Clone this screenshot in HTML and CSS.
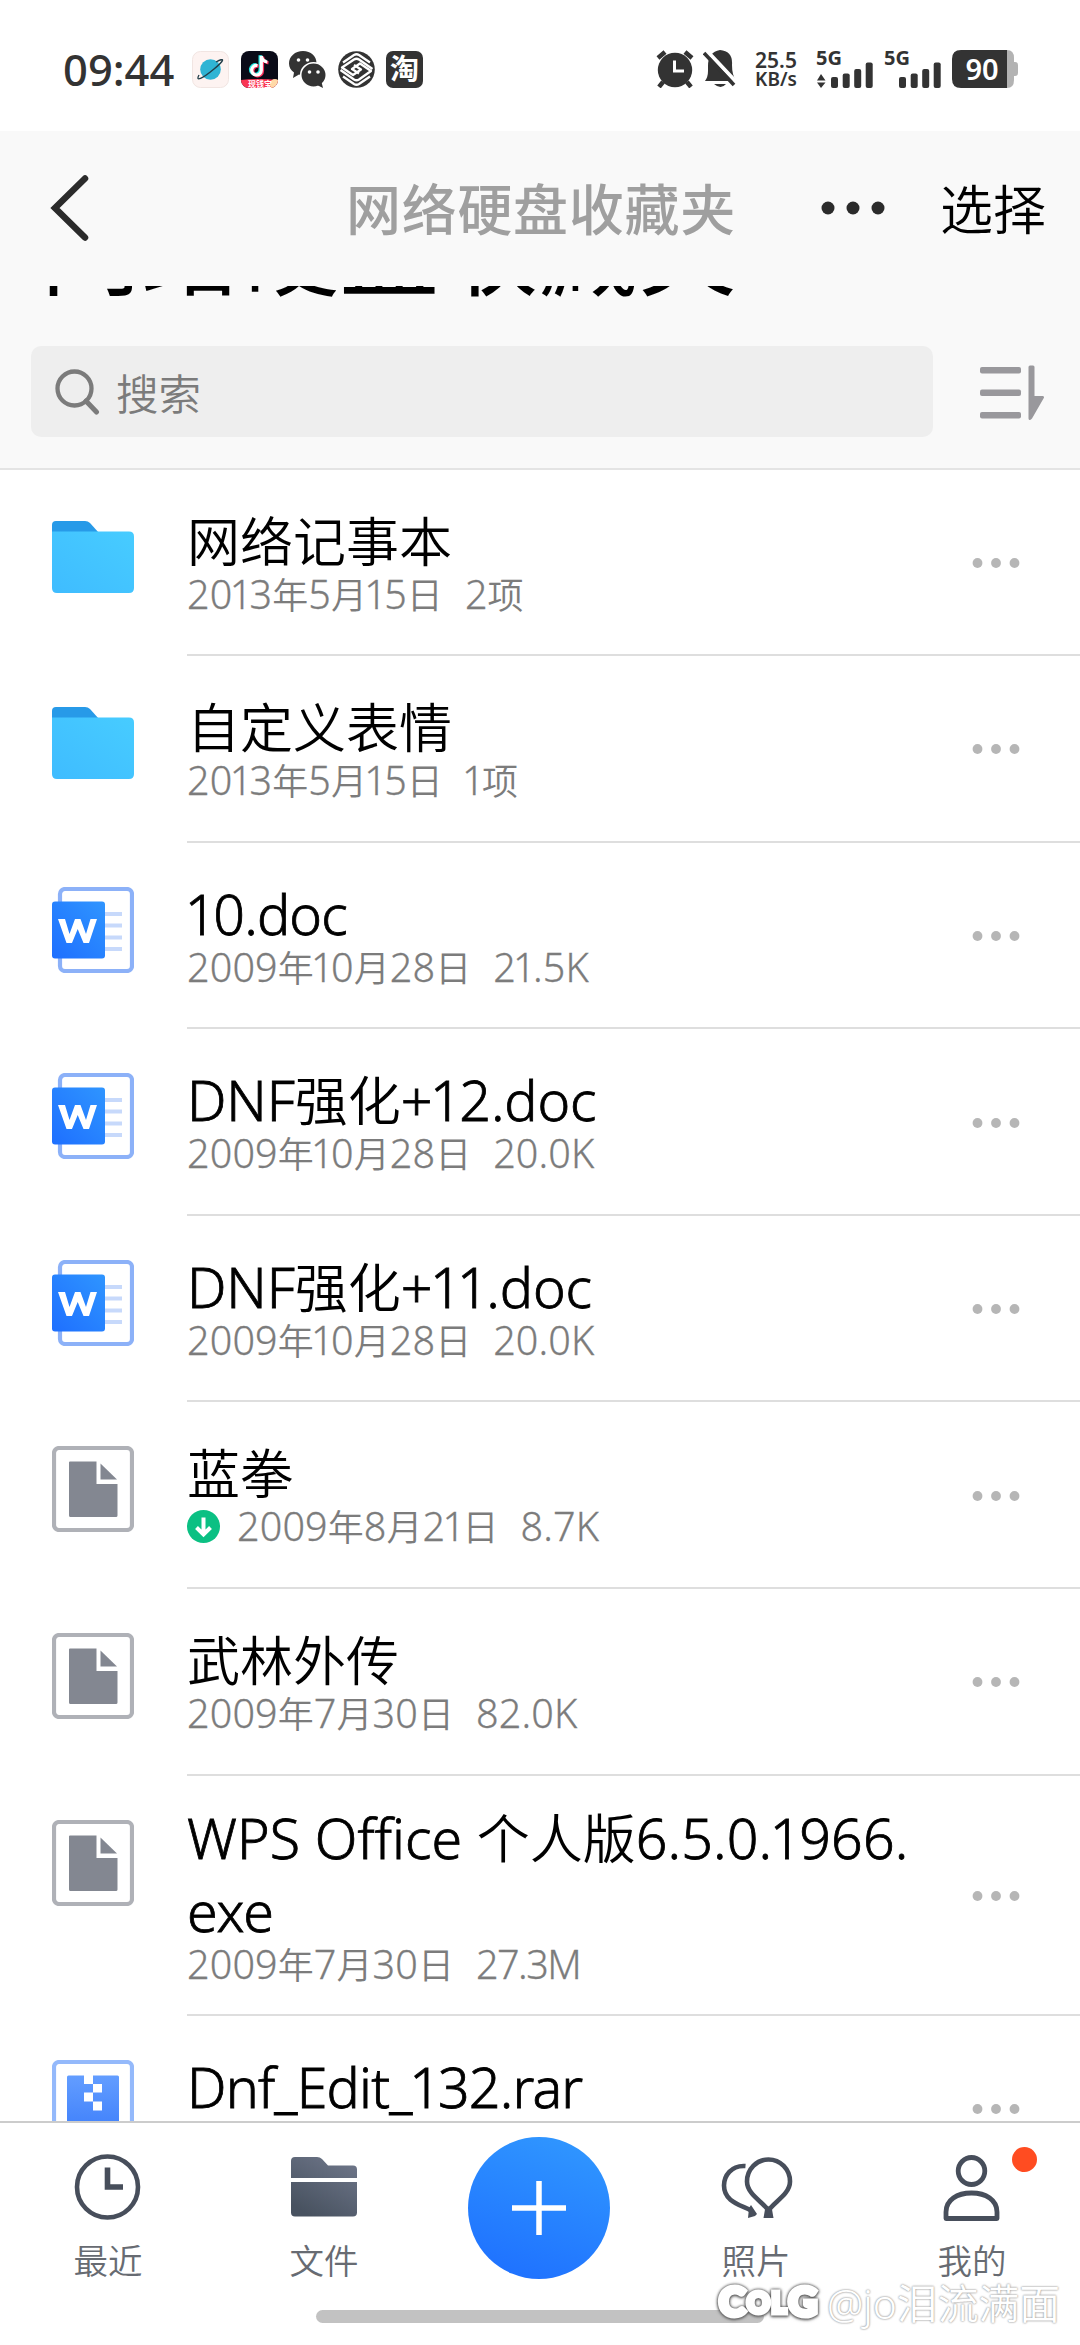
FILE: index.html
```html
<!DOCTYPE html>
<html lang="zh-CN">
<head>
<meta charset="utf-8">
<title>网络硬盘收藏夹</title>
<link rel="stylesheet" href="styles.css">
</head>
<body>
<svg class="defs" width="0" height="0" aria-hidden="true">
  <defs>
    <linearGradient id="g-folder" x1="1" y1="0" x2="0" y2="1"><stop offset="0" stop-color="#47ccff"/><stop offset="1" stop-color="#3fbcff"/></linearGradient>
    <linearGradient id="g-word" x1="1" y1="0" x2="0" y2="1"><stop offset="0" stop-color="#2f95ff"/><stop offset="1" stop-color="#1e6fff"/></linearGradient>
    <linearGradient id="g-zip" x1="0" y1="0" x2="0" y2="1"><stop offset="0" stop-color="#639dff"/><stop offset="1" stop-color="#3f80fb"/></linearGradient>
    <linearGradient id="g-nav" gradientUnits="userSpaceOnUse" x1="50" y1="0" x2="15" y2="60"><stop offset="0" stop-color="#6e7689"/><stop offset="1" stop-color="#485260"/></linearGradient>
    <symbol id="i-folder" viewBox="0 0 82 86">
      <path d="M0 26V11q0-4 4-4h29q3 0 5 2l9 10v8z" fill="#279ae8"/>
      <path d="M0 17.500H77q5 0 5 5V74q0 5-5 5H5q-5 0-5-5z" fill="url(#g-folder)"/>
    </symbol>
    <symbol id="i-word" viewBox="0 0 82 86">
      <rect x="8" y="2" width="72" height="82" rx="5" fill="#fff" stroke="#8cb1f8" stroke-width="4.200"/>
      <path d="M52 27H70M52 38.500H70M52 50.500H70M52 62H70" stroke="#c7d9fb" stroke-width="4"/>
      <rect x="0" y="14.500" width="53" height="57" rx="3" fill="url(#g-word)"/>
      <path d="M6 32H13L17.500 47L23 32H28.500L34 47L38.500 32H45L37 56H31.500L25.700 42L20 56H14.500z" fill="#fff"/>
    </symbol>
    <symbol id="i-file" viewBox="0 0 82 86">
      <rect x="2" y="2" width="78" height="82" rx="5" fill="#fff" stroke="#afb1b7" stroke-width="4.200"/>
      <path d="M18 15.500H44.500V38H65.500V69.500q0 1.500-1.500 1.500H18.500q-1.500 0-1.500-1.500V16.500q0-1 1-1z" fill="#838791"/>
      <path d="M48.500 17.500V33.500H65z" fill="#838791"/>
    </symbol>
    <symbol id="i-zip" viewBox="0 0 82 86">
      <rect x="2" y="2" width="78" height="82" rx="5" fill="#fff" stroke="#94b9fb" stroke-width="4.200"/>
      <rect x="15" y="15.500" width="52" height="56" rx="1.500" fill="url(#g-zip)"/>
      <path d="M32 15h9v9h-9zM41 24h9v8.500h-9zM32 32.500h9v9h-9zM41 41.500h9v9h-9z" fill="#fff"/>
    </symbol>
    <symbol id="i-more" viewBox="0 0 48 12"><g fill="#b6b6b6"><circle cx="5.500" cy="6" r="4.900"/><circle cx="24" cy="6" r="4.900"/><circle cx="42.500" cy="6" r="4.900"/></g></symbol>
    <symbol id="i-bars" viewBox="0 0 42 28"><g fill="#333"><rect x="0" y="16" width="7" height="11" rx="2"/><rect x="11.700" y="12.500" width="7" height="14.500" rx="2"/><rect x="23.200" y="8" width="7" height="19" rx="2"/><rect x="34.700" y="1.500" width="7" height="25.500" rx="2"/></g></symbol>
  </defs>
</svg>

<div class="screen">
  <header class="status">
    <time class="clock">09:44</time>
    <div class="apps">
      <svg width="37" height="37" viewBox="0 0 37 37"><rect x=".5" y=".5" width="36" height="36" rx="8" fill="#fdf3f1" stroke="#f1e5e2"/><circle cx="18.500" cy="18.500" r="10.300" fill="#2fb4d4"/><path d="M24 11C33 6 33 9 22 18C10 28 3 31 7 24" fill="none" stroke="#223f4a" stroke-width="1.400"/></svg>
      <svg width="37" height="37" viewBox="0 0 37 37"><defs><clipPath id="c-dy"><rect width="37" height="37" rx="8"/></clipPath></defs><g clip-path="url(#c-dy)"><rect width="37" height="37" fill="#0a0b18"/><g fill="none" stroke-width="3.200"><path d="M16.500 14.500a4.800 4.800 0 1 0 3.800 4.700V5q1 5.500 6 6" stroke="#25e4e0" transform="translate(-1.200 -.8)"/><path d="M16.500 14.500a4.800 4.800 0 1 0 3.800 4.700V5q1 5.500 6 6" stroke="#fb2d5a" transform="translate(1.200 .8)"/><path d="M16.500 14.500a4.800 4.800 0 1 0 3.800 4.700V5q1 5.500 6 6" stroke="#fff"/></g><path d="M0 29Q19 27 37 29V37H0z" fill="#fa3553"/><circle cx="34" cy="33" r="5" fill="#ffd9a8"/></g><text x="7" y="35.500" class="dy-tag">现钱宝</text></svg>
      <svg width="37" height="37" viewBox="0 0 37 37"><path d="M14 0C6 0 0 5.500 0 12.500c0 4 2 7 5 9L4 27l6-3.500q2 .6 4 .6C22 24 27.500 19 27.500 12S22 0 14 0z" fill="#333"/><ellipse cx="24.500" cy="24" rx="12.800" ry="12.300" fill="#333" stroke="#fff" stroke-width="1.600"/><path d="M28 34l6 3-1.500-6z" fill="#333"/><g fill="#fff"><circle cx="9.500" cy="9" r="1.800"/><circle cx="18.500" cy="9" r="1.800"/><circle cx="20.500" cy="21" r="1.800"/><circle cx="29" cy="21" r="1.800"/></g></svg>
      <svg width="37" height="37" viewBox="0 0 37 37"><circle cx="18.500" cy="18.500" r="18.300" fill="#333"/><g fill="none" stroke="#fff" stroke-width="2.300" stroke-linejoin="round"><path d="M2.500 19L16 28.500Q18.500 30 21 28.500L33 20L22 12.500L14 18L21 22.500"/><path d="M34.500 18L21 8.500Q18.500 7 16 8.500L4 16.500L15 24L23 18.500L16 14"/><path d="M5 25.500L16 33Q18.500 34.500 21 33L32 25.500"/><path d="M32 11.500L21 4Q18.500 2.500 16 4L5 11.500"/></g></svg>
      <svg width="37" height="37" viewBox="0 0 37 37"><rect width="37" height="37" rx="7" fill="#333"/><text x="18.500" y="29" class="tao">淘</text></svg>
    </div>
    <div class="signals">
      <svg class="s-alarm" width="38" height="38" viewBox="0 0 38 38"><circle cx="19" cy="20" r="17.200" fill="#333"/><path d="M2 8L9 2M36 8L29 2" stroke="#333" stroke-width="4.500"/><path d="M7 32L3 37M31 32L35 37" stroke="#333" stroke-width="4.500"/><path d="M18.500 10.500V21H28" fill="none" stroke="#fff" stroke-width="3"/></svg>
      <svg class="s-bell" width="34" height="38" viewBox="0 0 34 38"><path d="M2 31q3-4 3-10V16Q5 2 17 0q13 1 12 15 0 10 4 16zM11 34h12q-5 6-12 0z" fill="#333"/><path d="M3 0L34 33" stroke="#fff" stroke-width="4"/><path d="M1 3L31 35" stroke="#333" stroke-width="3.600"/></svg>
      <div class="speed"><span>25.5</span><span>KB/s</span></div>
      <svg class="s-5g" width="57" height="38" viewBox="0 0 57 38"><text x="0" y="14.500" class="fiveg">5G</text><path d="M1 30.500L5 24L9.500 30.500zM1 32.500L5 38L9.500 32.500z" fill="#333"/><use href="#i-bars" x="15" y="11" width="42" height="28"/></svg>
      <svg class="s-5g2" width="57" height="38" viewBox="0 0 57 38"><text x="0" y="14.500" class="fiveg">5G</text><use href="#i-bars" x="15" y="11" width="42" height="28"/></svg>
      <svg width="66" height="38" viewBox="0 0 66 38"><path d="M50 0h5q7 0 7 8v4h1q3 0 3 3v8q0 3-3 3h-1v4q0 8-7 8h-5z" fill="#b3b3b3"/><path d="M9 0H55V38H9Q0 38 0 29V9Q0 0 9 0z" fill="#333"/><text x="30" y="29.500" class="batt">90</text></svg>
    </div>
  </header>

  <section class="head">
    <div class="topbar">
      <svg class="back" width="40" height="68" viewBox="0 0 40 68"><path d="M35 4.500L5 34L35 63.500" fill="none" stroke="#2b2b2b" stroke-width="6.500" stroke-linecap="round"/></svg>
      <h1 class="title">网络硬盘收藏夹</h1>
      <svg class="dots" width="64" height="14" viewBox="0 0 64 14"><g fill="#2b2b2b"><circle cx="7" cy="7" r="6.500"/><circle cx="32" cy="7" r="6.500"/><circle cx="57" cy="7" r="6.500"/></g></svg>
      <span class="select">选择</span>
    </div>
    <div class="big"><span>网络硬盘收藏夹</span></div>
    <div class="tools">
      <div class="search">
        <svg width="46" height="46" viewBox="0 0 46 46"><circle cx="19.500" cy="19.500" r="17" fill="none" stroke="#7b7b7b" stroke-width="4.300"/><path d="M31 32L41.500 43" stroke="#7b7b7b" stroke-width="5" stroke-linecap="round"/></svg>
        <span>搜索</span>
      </div>
      <svg class="sort" width="65" height="55" viewBox="0 0 65 55"><g fill="#99989c"><rect x="0" y="2" width="41" height="6.500" rx="2"/><rect x="0" y="24.500" width="41" height="6.500" rx="2"/><rect x="0" y="47" width="41" height="6.500" rx="2"/><path d="M48.500 2q0-1.500 1.500-1.500h3q1.500 0 1.500 1.500V31h8.500q1.500.5.800 2L52 53.500q-3 3-3.500 0z"/></g></svg>
    </div>
  </section>

  <main class="list">
    <article class="row"><svg class="ico"><use href="#i-folder"/></svg><div class="cell"><div class="txt"><p class="name">网络记事本</p><p class="meta"><b>20<u>1</u>3</b>年<b>5</b>月<b><u>1</u>5</b>日<i></i><b>2</b>项</p></div><svg class="more"><use href="#i-more"/></svg></div></article>
    <article class="row"><svg class="ico"><use href="#i-folder"/></svg><div class="cell"><div class="txt"><p class="name">自定义表情</p><p class="meta"><b>20<u>1</u>3</b>年<b>5</b>月<b><u>1</u>5</b>日<i></i><b><u>1</u></b>项</p></div><svg class="more"><use href="#i-more"/></svg></div></article>
    <article class="row"><svg class="ico"><use href="#i-word"/></svg><div class="cell"><div class="txt"><p class="name"><b class="tight"><u>1</u>0.doc</b></p><p class="meta"><b>2009</b>年<b><u>1</u>0</b>月<b>28</b>日<i></i><b>2<u>1</u>.5K</b></p></div><svg class="more"><use href="#i-more"/></svg></div></article>
    <article class="row"><svg class="ico"><use href="#i-word"/></svg><div class="cell"><div class="txt"><p class="name"><b>DNF</b>强化<b>+<u>1</u>2.doc</b></p><p class="meta"><b>2009</b>年<b><u>1</u>0</b>月<b>28</b>日<i></i><b>20.0K</b></p></div><svg class="more"><use href="#i-more"/></svg></div></article>
    <article class="row"><svg class="ico"><use href="#i-word"/></svg><div class="cell"><div class="txt"><p class="name"><b>DNF</b>强化<b>+<u>1</u><u>1</u>.doc</b></p><p class="meta"><b>2009</b>年<b><u>1</u>0</b>月<b>28</b>日<i></i><b>20.0K</b></p></div><svg class="more"><use href="#i-more"/></svg></div></article>
    <article class="row"><svg class="ico"><use href="#i-file"/></svg><div class="cell"><div class="txt"><p class="name">蓝拳</p><p class="meta"><svg class="down" width="33" height="33" viewBox="0 0 33 33"><circle cx="16.500" cy="16.500" r="16.500" fill="#0bc083"/><path d="M16.500 7.500V24M9.500 17.500L16.500 24.500L23.500 17.500" fill="none" stroke="#fff" stroke-width="4"/></svg><b>2009</b>年<b>8</b>月<b>2<u>1</u></b>日<i></i><b>8.7K</b></p></div><svg class="more"><use href="#i-more"/></svg></div></article>
    <article class="row"><svg class="ico"><use href="#i-file"/></svg><div class="cell"><div class="txt"><p class="name">武林外传</p><p class="meta"><b>2009</b>年<b>7</b>月<b>30</b>日<i></i><b>82.0K</b></p></div><svg class="more"><use href="#i-more"/></svg></div></article>
    <article class="row tall"><svg class="ico"><use href="#i-file"/></svg><div class="cell"><div class="txt"><p class="name"><b class="wide">WPS Office </b>个人版<b class="wide">6.5.0.<u>1</u>966.</b><br><b>exe</b></p><p class="meta"><b>2009</b>年<b>7</b>月<b>30</b>日<i></i><b class="tight">27.3M</b></p></div><svg class="more"><use href="#i-more"/></svg></div></article>
    <article class="row"><svg class="ico"><use href="#i-zip"/></svg><div class="cell"><div class="txt"><p class="name"><b class="tight">Dnf_Edit_<u>1</u>32.rar</b></p></div><svg class="more"><use href="#i-more"/></svg></div></article>
  </main>

  <nav class="nav">
    <div class="tabs">
      <a class="tab"><svg width="70" height="70" viewBox="0 0 70 70"><circle cx="34.500" cy="35" r="30.500" fill="none" stroke="#474e5b" stroke-width="4.600"/><path d="M34.500 15.500V35H50" fill="none" stroke="#474e5b" stroke-width="5.600"/></svg><span>最近</span></a>
      <a class="tab"><svg width="70" height="70" viewBox="0 0 70 70"><path d="M2 26V9q0-4 4-4H28q3 0 5 2l6 6.500H64q4 0 4 4V26zM2 30H68V60.500q0 4-4 4H6q-4 0-4-4z" fill="url(#g-nav)"/></svg><span>文件</span></a>
      <a class="add"><svg width="54" height="54" viewBox="0 0 54 54"><path d="M27 0V54M0 27H54" stroke="#fff" stroke-width="5.500"/></svg></a>
      <a class="tab"><svg width="74" height="70" viewBox="0 0 74 70"><g fill="none" stroke="#474e5b" stroke-width="4.600"><path d="M49.500 59C46 51 28 43 28 29.500a21.500 22 0 0 1 43 0C71 43 53 51 49.500 59z"/><path d="M26.500 14C12 13 5 24 5 33.500C5 50 22 53 32 58.500"/></g><path d="M46.500 54.500h6l2 11.500h-10zM32 53l6 9-2 2-7 2 1-10z" fill="#474e5b"/></svg><span>照片</span></a>
      <a class="tab"><svg width="70" height="70" viewBox="0 0 70 70"><g fill="none" stroke="#474e5b" stroke-width="4.800" stroke-linejoin="round"><ellipse cx="34.500" cy="19" rx="13.300" ry="13.500"/><path d="M9 66.500V60C9 48 20 41 34.500 41S60 48 60 60V66.500z"/></g></svg><span>我的</span><em class="badge"></em></a>
    </div>
    <div class="home"></div>
  </nav>
  <div class="mark"><strong>C<small>OL</small>G</strong><span>@jo泪流满面</span></div>
</div>
</body>
</html>
```

FILE: styles.css
```css
* { box-sizing: border-box; }
body { margin: 0; background: #fff; font-family: "Noto Sans", "Noto Sans CJK SC", sans-serif; }
h1, p { margin: 0; }
svg { display: block; flex: none; }
u { text-decoration: none; }
.defs { position: absolute; }

.screen { position: relative; width: 1080px; height: 2345px; display: flex; flex-direction: column; overflow: hidden; }

.status { height: 131px; flex: none; display: flex; padding: 50px 62px 0 63px; color: #333; }
.clock { width: 129px; font-size: 43.500px; font-weight: 500; line-height: 39px; white-space: nowrap; }
.apps { display: flex; gap: 11.600px; padding-top: 1px; }
.dy-tag { font: 700 8px "Noto Sans CJK SC", sans-serif; fill: #fff; }
.tao { font: 700 29px "Noto Sans CJK SC", sans-serif; fill: #fff; text-anchor: middle; }
.signals { display: flex; margin-left: auto; }
.s-alarm { margin-right: 9px; }
.s-bell { margin-right: 15px; }
.speed { width: 48px; margin-right: 16px; display: flex; flex-direction: column; align-items: center; font-weight: 600; font-size: 21px; line-height: 20px; }
.speed span:last-child { font-size: 19px; line-height: 18px; }
.s-5g, .s-5g2 { margin-right: 11px; }
.fiveg { font: 700 20px "Noto Sans", sans-serif; fill: #333; }
.batt { font: 600 29px "Noto Sans", sans-serif; fill: #fff; text-anchor: middle; }

.head { height: 338.500px; flex: none; background: #f9f9f9; border-bottom: 2px solid #e4e4e4; }
.topbar { height: 155px; display: flex; align-items: center; padding: 0 34px 0 50px; }
.back { margin: -2px 256px 0 0; }
.title { width: 392px; margin-top: -6px; font: 500 55px/80px "Noto Sans CJK SC", sans-serif; letter-spacing: .7px; color: #9f9f9f; white-space: nowrap; }
.dots { margin: -1px 0 0 83px; }
.select { margin: -4px 0 0 auto; font: 350 53px/80px "Noto Sans CJK SC", sans-serif; color: #000; white-space: nowrap; }
.big { height: 40px; overflow: hidden; display: flex; align-items: flex-end; padding: 0 0 0 41px; }
.big span { font: 400 99.500px/100px "Noto Sans CJK SC", sans-serif; color: #000; white-space: nowrap; margin-bottom: 31px; }
.tools { display: flex; align-items: center; justify-content: space-between; margin-top: 20px; padding: 0 35px 0 31px; }
.sort { margin-top: 2px; }
.search { width: 902px; height: 91px; border-radius: 10px; background: #eee; display: flex; align-items: center; gap: 15px; padding-left: 24px; color: #7b7b7b; font-size: 42.500px; font-weight: 350; }
.search span { margin-top: -1px; }

.list { flex: 1; min-height: 0; overflow: hidden; }
.row { height: 186.600px; display: flex; padding-left: 52px; }
.tall { height: 240.500px; }
.ico { width: 82px; height: 86px; margin: 44px 53px 0 0; }
.cell { flex: 1; display: flex; align-items: center; justify-content: space-between; border-bottom: 2px solid #dedede; padding-right: 60px; }
.txt { align-self: flex-start; padding-top: 35px; white-space: nowrap; }
.tall .txt { padding-top: 26px; }
.name { font-size: 53px; line-height: 73px; font-weight: 350; color: #000; }
.name b { font-size: 55.500px; font-weight: 350; line-height: 1; letter-spacing: -.1px; -webkit-text-stroke: .8px #000; }
.name u { margin: 0 -2.300px; }
.name .tight { letter-spacing: -.8px; }
.name .wide { letter-spacing: .1px; }
.meta { font-size: 36px; line-height: 32px; font-weight: 350; color: #7c7c7c; display: flex; align-items: baseline; }
.meta b { font-size: 39.500px; font-weight: 350; letter-spacing: .15px; -webkit-text-stroke: .3px #7c7c7c; }
.meta u { margin: 0 -2.800px; }
.meta .tight { letter-spacing: -1.500px; }
.meta i { width: 22px; }
.down { align-self: center; margin: -2px 17px 0 0; }
.more { width: 48px; height: 12px; margin-top: 2px; }

.nav { height: 224px; flex: none; border-top: 2px solid #ccc; background: #fff; display: flex; flex-direction: column; align-items: center; }
.tabs { width: 1080px; height: 187px; display: grid; grid-template-columns: repeat(5, 216px); justify-items: center; }
.tab { position: relative; width: 216px; padding-top: 29px; display: flex; flex-direction: column; align-items: center; }
.tab span { font-size: 34.500px; font-weight: 350; line-height: 44px; margin-top: 17px; color: #676b72; }
.badge { position: absolute; left: 148px; top: 24px; width: 25px; height: 25px; border-radius: 50%; background: #ff4c21; }
.add { width: 142px; height: 142px; margin: 14px 2px 0 0; border-radius: 50%; display: flex; align-items: center; justify-content: center; background: linear-gradient(200deg, #2f95ff 10%, #1f72ff 90%); }
.home { width: 448px; height: 13px; border-radius: 7px; background: #c2c2c2; }

.mark { position: absolute; left: 719px; top: 2276px; display: flex; align-items: center; gap: 8px; color: #fff; line-height: 50px; white-space: nowrap; }
.mark strong { width: 100px; font: 900 40px/50px "Lato", sans-serif; letter-spacing: -.5px; -webkit-text-stroke: 5px #fff; filter: drop-shadow(0 0 1.500px #444) drop-shadow(0 1px 1px #777); }
.mark small { font-size: 28px; letter-spacing: 2px; position: relative; top: -3px; margin-left: 2px; }
.mark span { font-size: 40.800px; font-weight: 350; text-shadow: 0 0 2px #999, 0 0 2px #aaa; }
```
